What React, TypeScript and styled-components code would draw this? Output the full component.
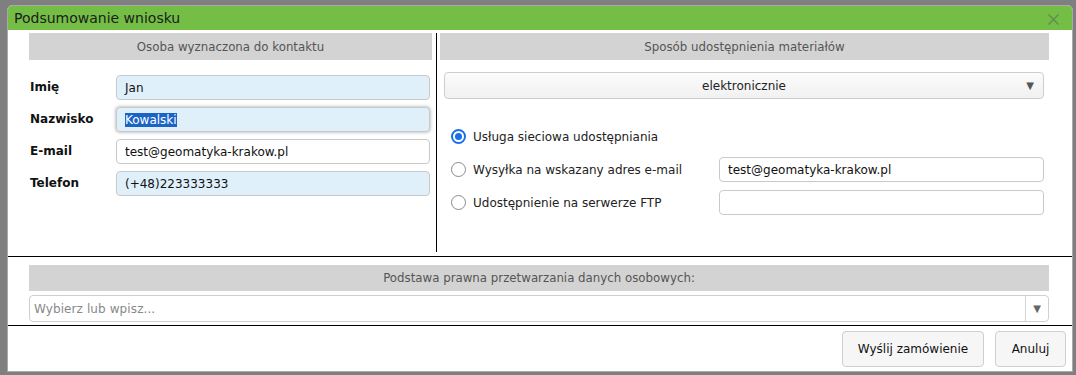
import React from "react";
import styled, { createGlobalStyle } from "styled-components";

const Global = createGlobalStyle`
  html, body { margin: 0; padding: 0; background: #7f7f7f; }
  body { font-family: "DejaVu Sans", "Liberation Sans", sans-serif; }
  * { box-sizing: border-box; }
`;

const Page = styled.div`
  width: 1076px;
  height: 375px;
  padding: 5px 4px 3px 7px;
  background: #7f7f7f;
`;

const Dialog = styled.div`
  width: 1066px;
  height: 367px;
  border: 1px solid #a9a9a9;
  border-radius: 5px 5px 0 0;
  background: #fff;
  display: flex;
  flex-direction: column;
  overflow: hidden;
`;

const TitleBar = styled.div`
  height: 24px;
  flex: none;
  background: #74be45;
  display: flex;
  align-items: center;
  justify-content: space-between;
  padding: 0 13px 0 6px;
`;

const Title = styled.span`
  font-size: 14px;
  color: #1c1c1c;
  line-height: 24px;
`;

const CloseIcon = styled.svg`
  width: 11px;
  height: 11px;
  margin-top: 3px;
`;

const Top = styled.div`
  display: flex;
  height: 227px;
  flex: none;
  border-bottom: 1px solid #000;
  padding: 3px 0 4px;
`;

const Column = styled.div<{ $w?: number; $pl: number; $pr: number; $divider?: boolean }>`
  ${(p) => (p.$w ? `width: ${p.$w}px; flex: none;` : "flex: 1;")}
  padding: 0 ${(p) => p.$pr}px 0 ${(p) => p.$pl}px;
  border-right: ${(p) => (p.$divider ? "1px solid #000" : "none")};
  display: flex;
  flex-direction: column;
`;

const SectionHeader = styled.div<{ $h?: number }>`
  height: ${(p) => p.$h ?? 27}px;
  flex: none;
  background: #d3d3d3;
  color: #555;
  font-size: 11.8px;
  display: flex;
  align-items: center;
  justify-content: center;
`;

const FormGrid = styled.div`
  margin: 15px 2px 0 0;
  display: grid;
  grid-template-columns: 86px 1fr;
  row-gap: 7px;
  padding-left: 1px;
`;

const Label = styled.label`
  font-weight: bold;
  font-size: 12px;
  color: #111;
  align-self: center;
  margin-top: -1px;
`;

const TextInput = styled.div<{ $tint?: boolean; $focus?: boolean }>`
  height: 25px;
  border: 1px solid #c9c9c9;
  border-radius: 4px;
  background: ${(p) => (p.$tint ? "#dff0fb" : "#fff")};
  box-shadow: ${(p) => (p.$focus ? "0 0 3px 1px rgba(0,0,0,0.22)" : "none")};
  font-size: 12px;
  color: #111;
  display: flex;
  align-items: center;
  padding-left: 8px;
  white-space: nowrap;
  overflow: hidden;
`;

const Selected = styled.span`
  background: #1a64c8;
  color: #fff;
`;

const Inner = styled.div`
  display: flex;
  flex-direction: column;
  padding: 0 5px 0 4px;
`;

const SelectBox = styled.div`
  margin-top: 12px;
  height: 27px;
  border: 1px solid #cdcdcd;
  border-radius: 4px;
  background: linear-gradient(#fbfbfb, #f1f1f1);
  display: flex;
  align-items: center;
  font-size: 12px;
  color: #222;
`;

const SelectText = styled.span`
  flex: 1;
  text-align: center;
  padding-left: 22px;
`;

const Arrow = styled.span`
  width: 22px;
  text-align: center;
  color: #555;
  font-size: 10px;
  padding-right: 4px;
`;

const RadioList = styled.div`
  margin-top: 25px;
  display: flex;
  flex-direction: column;
  gap: 8px;
  padding-left: 7px;
`;

const RadioRow = styled.div`
  display: grid;
  grid-template-columns: 22px 246px 1fr;
  align-items: center;
  height: 25px;
`;

const Radio = styled.span<{ $checked?: boolean }>`
  width: 15px;
  height: 15px;
  border-radius: 50%;
  border: ${(p) => (p.$checked ? "2px solid #1a6fe6" : "1.5px solid #8a8a8f")};
  display: flex;
  align-items: center;
  justify-content: center;
  &::after {
    content: "";
    width: 7px;
    height: 7px;
    border-radius: 50%;
    background: ${(p) => (p.$checked ? "#1a6fe6" : "transparent")};
  }
`;

const RadioLabel = styled.span`
  font-size: 12px;
  color: #222;
  white-space: nowrap;
`;

const Bottom = styled.div`
  flex: none;
  height: 69px;
  border-bottom: 1px solid #000;
  padding: 8px 23px 3px 21px;
  display: flex;
  flex-direction: column;
  gap: 4px;
`;

const Combo = styled.div`
  height: 27px;
  border: 1px solid #cfcfcf;
  border-radius: 4px;
  display: flex;
  align-items: stretch;
  font-size: 12px;
`;

const Placeholder = styled.span`
  flex: 1;
  color: #888;
  display: flex;
  align-items: center;
  padding-left: 4px;
  letter-spacing: 0.1px;
`;

const ComboButton = styled.span`
  width: 23px;
  border-left: 1px solid #d6d6d6;
  display: flex;
  align-items: center;
  justify-content: center;
  color: #666;
  font-size: 10px;
`;

const Footer = styled.div`
  flex: 1;
  display: flex;
  justify-content: flex-end;
  align-items: flex-start;
  gap: 11px;
  padding: 5px 6px 0 0;
`;

const Button = styled.button<{ $w: number }>`
  width: ${(p) => p.$w}px;
  height: 36px;
  border: 1px solid #cfcfcf;
  border-radius: 4px;
  background: #f6f6f6;
  font-family: "DejaVu Sans", sans-serif;
  font-size: 12px;
  color: #111;
  padding: 0;
`;

export default function App() {
  return (
    <>
      <Global />
      <Page>
        <Dialog>
          <TitleBar>
            <Title>Podsumowanie wniosku</Title>
            <CloseIcon viewBox="0 0 11 11">
              <path d="M0.5 0.5 L10.5 10.5 M10.5 0.5 L0.5 10.5" stroke="#5f9052" strokeWidth="1.5" />
            </CloseIcon>
          </TitleBar>
          <Top>
            <Column $w={429} $pl={21} $pr={4} $divider>
              <SectionHeader>Osoba wyznaczona do kontaktu</SectionHeader>
              <FormGrid>
                <Label>Imię</Label>
                <TextInput $tint>Jan</TextInput>
                <Label>Nazwisko</Label>
                <TextInput $tint $focus>
                  <Selected>Kowalski</Selected>
                </TextInput>
                <Label>E-mail</Label>
                <TextInput>test@geomatyka-krakow.pl</TextInput>
                <Label>Telefon</Label>
                <TextInput $tint>(+48)223333333</TextInput>
              </FormGrid>
            </Column>
            <Column $pl={3} $pr={23}>
              <SectionHeader>Sposób udostępnienia materiałów</SectionHeader>
              <Inner>
                <SelectBox>
                  <SelectText>elektronicznie</SelectText>
                  <Arrow>▼</Arrow>
                </SelectBox>
                <RadioList>
                  <RadioRow>
                    <Radio $checked />
                    <RadioLabel>Usługa sieciowa udostępniania</RadioLabel>
                  </RadioRow>
                  <RadioRow>
                    <Radio />
                    <RadioLabel>Wysyłka na wskazany adres e-mail</RadioLabel>
                    <TextInput>test@geomatyka-krakow.pl</TextInput>
                  </RadioRow>
                  <RadioRow>
                    <Radio />
                    <RadioLabel>Udostępnienie na serwerze FTP</RadioLabel>
                    <TextInput />
                  </RadioRow>
                </RadioList>
              </Inner>
            </Column>
          </Top>
          <Bottom>
            <SectionHeader $h={26}>Podstawa prawna przetwarzania danych osobowych:</SectionHeader>
            <Combo>
              <Placeholder>Wybierz lub wpisz...</Placeholder>
              <ComboButton>▼</ComboButton>
            </Combo>
          </Bottom>
          <Footer>
            <Button $w={142}>Wyślij zamówienie</Button>
            <Button $w={71}>Anuluj</Button>
          </Footer>
        </Dialog>
      </Page>
    </>
  );
}
